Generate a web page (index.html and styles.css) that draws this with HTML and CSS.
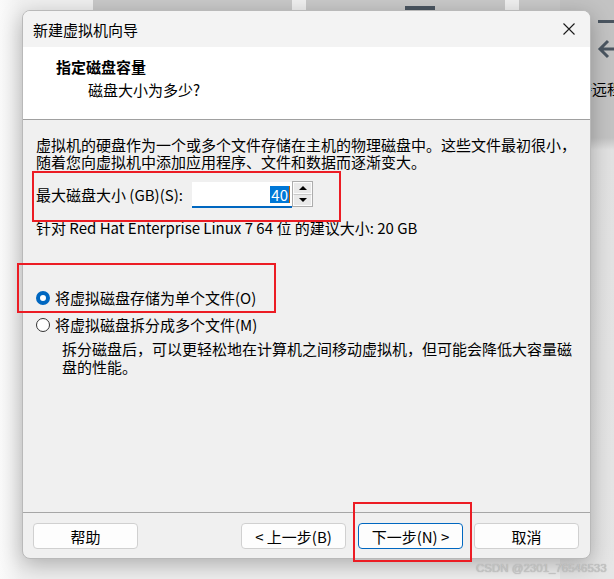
FILE: index.html
```html
<!DOCTYPE html>
<html>

<head>
    <meta http-equiv="content-type" content="text/html; charset=UTF-8">
    <title>新建虚拟机向导</title>
    <link rel="stylesheet" href="styles.css">
</head>

<body>
    <div class="desktop">
        <div class="back-win win-a"></div>
        <div class="back-win win-b"></div>
        <div class="back-win win-c"></div>
        <div class="back-bar"></div>
        <div class="side-panel">
            <span class="side-minus"></span>
            <svg class="side-arrow" width="24" height="20" viewBox="0 0 24 20">
                <path d="M13 2 L5 10 L13 18 M5 10 H24" fill="none" stroke="#4b5661" stroke-width="3" />
            </svg>
            <span class="side-text">接远程</span>
        </div>

        <div class="dialog">
            <div class="titlebar">
                <span class="title">新建虚拟机向导</span>
                <svg class="close" width="12" height="12" viewBox="0 0 12 12">
                    <path d="M0.5 0.5 L11.5 11.5 M11.5 0.5 L0.5 11.5" stroke="#1a1a1a" stroke-width="1.1" />
                </svg>
            </div>
            <div class="header">
                <div class="head-title">指定磁盘容量</div>
                <div class="head-sub">磁盘大小为多少?</div>
            </div>
            <div class="content">
                <p class="intro">虚拟机的硬盘作为一个或多个文件存储在主机的物理磁盘中。这些文件最初很小，<br>随着您向虚拟机中添加应用程序、文件和数据而逐渐变大。</p>
                <div class="size-row">
                    <label class="caption">最大磁盘大小 (GB)(S):</label>
                    <div class="spin-field">
                        <span class="spin-value">40</span><span class="caret"></span>
                    </div>
                    <div class="spin-buttons">
                        <span class="spin-btn"><span class="arrow-up"></span></span>
                        <span class="spin-btn"><span class="arrow-down"></span></span>
                    </div>
                </div>
                <p class="hint">针对 Red Hat Enterprise Linux 7 64 位 的建议大小: 20 GB</p>
                <div class="option"><span class="radio checked"></span>将虚拟磁盘存储为单个文件(O)</div>
                <div class="option"><span class="radio"></span>将虚拟磁盘拆分成多个文件(M)</div>
                <p class="option-desc">拆分磁盘后，可以更轻松地在计算机之间移动虚拟机，但可能会降低大容量磁<br>盘的性能。</p>
            </div>
            <div class="footer">
                <button class="btn">帮助</button>
                <span class="spacer"></span>
                <button class="btn">&lt; 上一步(B)</button>
                <button class="btn focused">下一步(N) &gt;</button>
                <button class="btn">取消</button>
            </div>
        </div>

        <div class="mark mark-size"></div>
        <div class="mark mark-radio"></div>
        <div class="mark mark-next"></div>
        <div class="watermark">CSDN @2301_76546533</div>
    </div>
</body>

</html>
```

FILE: styles.css
```css
html,
body {
    margin: 0;
    padding: 0;
}

body {
    background: #f4f4f4;
    font-family: "Noto Sans CJK SC", "Noto Sans", sans-serif;
    color: #000;
}

.desktop {
    position: relative;
    width: 614px;
    height: 579px;
    overflow: hidden;
    padding: 10px 0 0 22px;
    box-sizing: border-box;
    background: linear-gradient(to right, #fafafa 0, #f0f0f0 22px);
}

/* windows behind the dialog */
.back-win {
    position: absolute;
    top: 0;
    height: 60px;
    background: #c9c9c9;
}

.win-a {
    left: 93px;
    width: 199px;
}

.win-b {
    left: 306px;
    width: 199px;
}

.win-c {
    left: 519px;
    width: 95px;
}

.back-bar {
    position: absolute;
    left: 405px;
    top: 6px;
    width: 30px;
    height: 8px;
    background: #4b5661;
}

.side-panel {
    position: absolute;
    left: 560px;
    top: 0;
    width: 54px;
    height: 579px;
    background: linear-gradient(to bottom, #c3c3c3 0, #c3c3c3 138px, #e2e2e2 150px, #e6e6e6 100%);
}

.side-minus {
    position: absolute;
    left: 38px;
    top: 20px;
    width: 20px;
    height: 3px;
    background: #4b5661;
}

.side-arrow {
    position: absolute;
    left: 35px;
    top: 39px;
}

.side-text {
    position: absolute;
    left: 17px;
    top: 79px;
    font-size: 15px;
    line-height: 20px;
    white-space: nowrap;
}

/* dialog */
.dialog {
    position: relative;
    z-index: 1;
    width: 569px;
    height: 549px;
    box-sizing: border-box;
    border: 1px solid #b9b9b9;
    border-radius: 8px;
    background: #f0f0f0;
    box-shadow: 0 6px 22px rgba(0, 0, 0, 0.28);
    display: flex;
    flex-direction: column;
    overflow: hidden;
    font-size: 15px;
}

.titlebar {
    height: 36px;
    flex: none;
    background: #f3f3f3;
    display: flex;
    align-items: center;
    padding-left: 10px;
    padding-right: 15px;
}

.title {
    flex: 1;
    line-height: 20px;
    padding-top: 1px;
}

.close {
    display: block;
}

.header {
    height: 72px;
    flex: none;
    background: #fff;
    border-bottom: 1px solid #a0a0a0;
    box-sizing: content-box;
}

.head-title {
    font-weight: bold;
    line-height: 20px;
    padding: 10px 0 0 33px;
}

.head-sub {
    line-height: 18px;
    margin-top: 4px;
    padding-left: 65px;
}

.content {
    flex: 1;
    padding: 16px 13px 0 13px;
}

.intro,
.hint,
.option-desc {
    margin: 0;
    line-height: 17px;
    white-space: nowrap;
}

.size-row {
    display: flex;
    align-items: center;
    height: 26px;
    margin-top: 12px;
}

.caption {
    width: 156px;
    line-height: 17px;
    margin-top: -2px;
    white-space: nowrap;
}

.spin-field {
    width: 100px;
    height: 26px;
    box-sizing: border-box;
    background: #fff;
    border-bottom: 2px solid #0067c0;
    display: flex;
    align-items: center;
    justify-content: flex-end;
    padding-right: 2px;
}

.spin-value {
    background: #0078d7;
    color: #fff;
    line-height: 17px;
    padding: 0 1px;
}

.caret {
    width: 1px;
    height: 17px;
    background: #c06000;
}

.spin-buttons {
    width: 21px;
    height: 26px;
    box-sizing: border-box;
    border: 1px solid #adadad;
    display: flex;
    flex-direction: column;
    align-self: flex-start;
    margin-top: -1px;
}

.spin-btn {
    flex: 1;
    border: 1px solid #fcfcfc;
    background: #e9e9e9;
    display: flex;
    align-items: center;
    justify-content: center;
}

.spin-btn + .spin-btn {
    border-top: 1px solid #c8c8c8;
}

.arrow-up,
.arrow-down {
    width: 0;
    height: 0;
    border-left: 4px solid transparent;
    border-right: 4px solid transparent;
}

.arrow-up {
    border-bottom: 4px solid #000;
}

.arrow-down {
    border-top: 4px solid #000;
}

.hint {
    margin-top: 11px;
}

.option {
    height: 27px;
    display: flex;
    align-items: center;
    white-space: nowrap;
}

.hint + .option {
    margin-top: 48px;
}

.radio {
    width: 14px;
    height: 14px;
    box-sizing: border-box;
    border-radius: 50%;
    border: 1px solid #333;
    background: #fff;
    margin-right: 5px;
    flex: none;
}

.radio.checked {
    border: 4px solid #0067c0;
    background: #fff;
}

.option-desc {
    margin-top: 2px;
    margin-left: 26px;
    line-height: 18px;
}

.footer {
    flex: none;
    border-top: 1px solid #a6a6a6;
    display: flex;
    align-items: center;
    padding: 10px 11px 9px 10px;
    gap: 11px;
}

.spacer {
    flex: 1;
}

.btn {
    width: 105px;
    height: 26px;
    box-sizing: border-box;
    border: 1px solid #d0d0d0;
    border-radius: 4px;
    background: #fdfdfd;
    font-family: "Noto Sans CJK SC", "Noto Sans", sans-serif;
    font-size: 15px;
    line-height: 17px;
    color: #000;
    padding: 0;
}

.btn.focused {
    border-color: #0067c0;
    margin-left: 1px;
}

/* red annotation boxes */
.mark {
    position: absolute;
    z-index: 2;
    box-sizing: border-box;
    border: 2px solid #ec1c24;
}

.mark-size {
    left: 32px;
    top: 171px;
    width: 309px;
    height: 51px;
}

.mark-radio {
    left: 17px;
    top: 263px;
    width: 259px;
    height: 50px;
}

.mark-next {
    left: 353px;
    top: 502px;
    width: 119px;
    height: 60px;
}

.watermark {
    position: absolute;
    z-index: 2;
    left: 476px;
    top: 561px;
    font-family: "Liberation Sans", sans-serif;
    font-size: 11.5px;
    line-height: 15px;
    color: #c4c4c4;
    text-shadow: 0 0 1px #9a9a9a;
    white-space: nowrap;
}
```
